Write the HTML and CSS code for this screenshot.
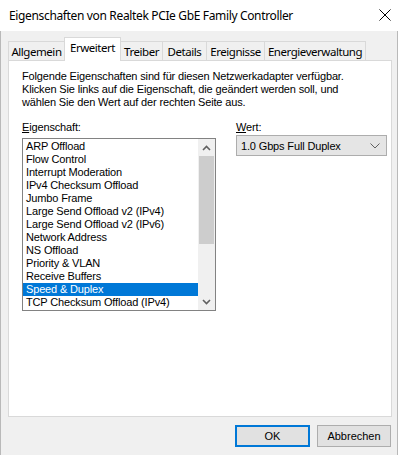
FILE: index.html
```html
<!DOCTYPE html>
<html lang="de">
<head>
<meta charset="utf-8">
<title>Eigenschaften</title>
<link rel="stylesheet" href="styles.css">
</head>
<body>
<div class="window">
  <div class="titlebar">
    <span class="title">Eigenschaften von Realtek PCIe GbE Family Controller</span>
    <span class="close">
      <svg width="12" height="12" viewBox="0 0 12 12"><path d="M0.5 0.5 L11.5 11.5 M11.5 0.5 L0.5 11.5" stroke="#000" stroke-width="1" fill="none"/></svg>
    </span>
  </div>
  <div class="main">
    <div class="tabs">
      <div class="tab t-allg">Allgemein</div>
      <div class="tab active t-erw">Erweitert</div>
      <div class="tab t-trb">Treiber</div>
      <div class="tab t-det">Details</div>
      <div class="tab t-erg">Ereignisse</div>
      <div class="tab t-ener">Energieverwaltung</div>
    </div>
    <div class="panel">
      <p class="intro">Folgende Eigenschaften sind für diesen Netzwerkadapter verfügbar.<br>Klicken Sie links auf die Eigenschaft, die geändert werden soll, und<br>wählen Sie den Wert auf der rechten Seite aus.</p>
      <div class="cols">
        <div class="col-left">
          <div class="label"><u>E</u>igenschaft:</div>
          <div class="listbox">
            <div class="items">
              <div class="item">ARP Offload</div>
              <div class="item">Flow Control</div>
              <div class="item">Interrupt Moderation</div>
              <div class="item">IPv4 Checksum Offload</div>
              <div class="item">Jumbo Frame</div>
              <div class="item">Large Send Offload v2 (IPv4)</div>
              <div class="item">Large Send Offload v2 (IPv6)</div>
              <div class="item">Network Address</div>
              <div class="item">NS Offload</div>
              <div class="item">Priority &amp; VLAN</div>
              <div class="item">Receive Buffers</div>
              <div class="item selected">Speed &amp; Duplex</div>
              <div class="item">TCP Checksum Offload (IPv4)</div>
            </div>
            <div class="scrollbar">
              <div class="arrow">
                <svg width="9" height="6" viewBox="0 0 9 6"><path d="M1 5 L4.5 1.5 L8 5" stroke="#606060" stroke-width="1.6" fill="none"/></svg>
              </div>
              <div class="thumb"></div>
              <div class="track"></div>
              <div class="arrow">
                <svg width="9" height="6" viewBox="0 0 9 6"><path d="M1 1 L4.5 4.5 L8 1" stroke="#606060" stroke-width="1.6" fill="none"/></svg>
              </div>
            </div>
          </div>
        </div>
        <div class="col-right">
          <div class="label"><u>W</u>ert:</div>
          <div class="combo">
            <span>1.0 Gbps Full Duplex</span>
            <svg width="10" height="6" viewBox="0 0 10 6"><path d="M0.5 0.5 L5 5 L9.5 0.5" stroke="#606060" stroke-width="1" fill="none"/></svg>
          </div>
        </div>
      </div>
    </div>
    <div class="footer">
      <div class="btn default">OK</div>
      <div class="btn">Abbrechen</div>
    </div>
  </div>
</div>
</body>
</html>
```

FILE: styles.css
```css
* { box-sizing: border-box; }
html, body { margin: 0; padding: 0; background: #ffffff; }
body { width: 400px; height: 455px; overflow: hidden; }
.window { width: 400px; height: 455px; display: flex; flex-direction: column; }
.titlebar {
  height: 31px; background: #ffffff; display: flex; align-items: center;
  justify-content: space-between; padding: 0 9px 1px 9px;
  font-family: "Noto Sans", sans-serif; font-size: 12px; letter-spacing: -0.35px; color: #000;
}
.close { display: flex; }
.main {
  flex: 1; width: 398px; background: #f0f0f0;
  border-left: 1px solid #b9b9b9; border-right: 1px solid #b9b9b9;
  padding: 6px 6px 0 7px; display: flex; flex-direction: column;
}
.tabs { display: flex; align-items: flex-end; height: 23px; position: relative; z-index: 2; }
.tab {
  flex-shrink: 0; height: 19px; border: 1px solid #d9d9d9; border-bottom: none; margin-right: -1px;
  background: #f0f0f0; font-family: "Noto Sans", sans-serif; font-size: 11.5px; letter-spacing: -0.45px;
  display: flex; align-items: center; justify-content: center; color: #000; padding-top: 1px;
  white-space: nowrap;
}
.tab.active { height: 24px; background: #ffffff; margin-bottom: -1px; padding-top: 0; padding-bottom: 4px; position: relative; z-index: 3; }
.t-allg { width: 57px; }
.t-erw { width: 57px; }
.t-trb { width: 43px; }
.t-det { width: 45px; }
.t-erg { width: 59px; }
.t-ener { width: 102px; }
.panel {
  width: 384px; height: 357px; background: #ffffff; border: 1px solid #d9d9d9;
  padding: 9px 3px 0 13px; font-family: "Liberation Sans", Arial, sans-serif; font-size: 11px;
  letter-spacing: -0.15px; color: #000;
  position: relative; z-index: 1;
}
.intro { margin: 0; line-height: 13px; }
.cols { display: flex; margin-top: 12px; }
.col-left { width: 194px; flex-shrink: 0; }
.col-right { margin-left: 20px; width: 151px; flex-shrink: 0; }
.label { line-height: 13px; height: 13px; }
.listbox {
  margin-top: 4px; width: 194px; height: 173px; border: 1px solid #828282;
  display: flex;
}
.items { width: 175px; padding-top: 1px; }
.item { height: 13px; line-height: 13px; padding-left: 3px; white-space: nowrap; overflow: hidden; }
.item.selected { background: #0078d7; color: #ffffff; }
.scrollbar { width: 17px; display: flex; flex-direction: column; background: #f0f0f0; }
.arrow { height: 17px; display: flex; align-items: center; justify-content: center; }
.thumb { height: 88px; background: #cdcdcd; margin: 0 1px; }
.track { flex: 1; }
.combo {
  margin-top: 1px; height: 21px; border: 1px solid #adadad; background: #e5e5e5;
  display: flex; align-items: center; justify-content: space-between; padding: 0 6px 0 4px;
}
.footer { display: flex; justify-content: flex-end; padding-top: 8px; gap: 7px; }
.btn {
  width: 74px; height: 22px; background: #e1e1e1; border: 1px solid #adadad;
  font-family: "Liberation Sans", Arial, sans-serif; font-size: 11px; color: #000;
  display: flex; align-items: center; justify-content: center;
}
.btn.default { width: 75px; border: 2px solid #0078d7; }
```
